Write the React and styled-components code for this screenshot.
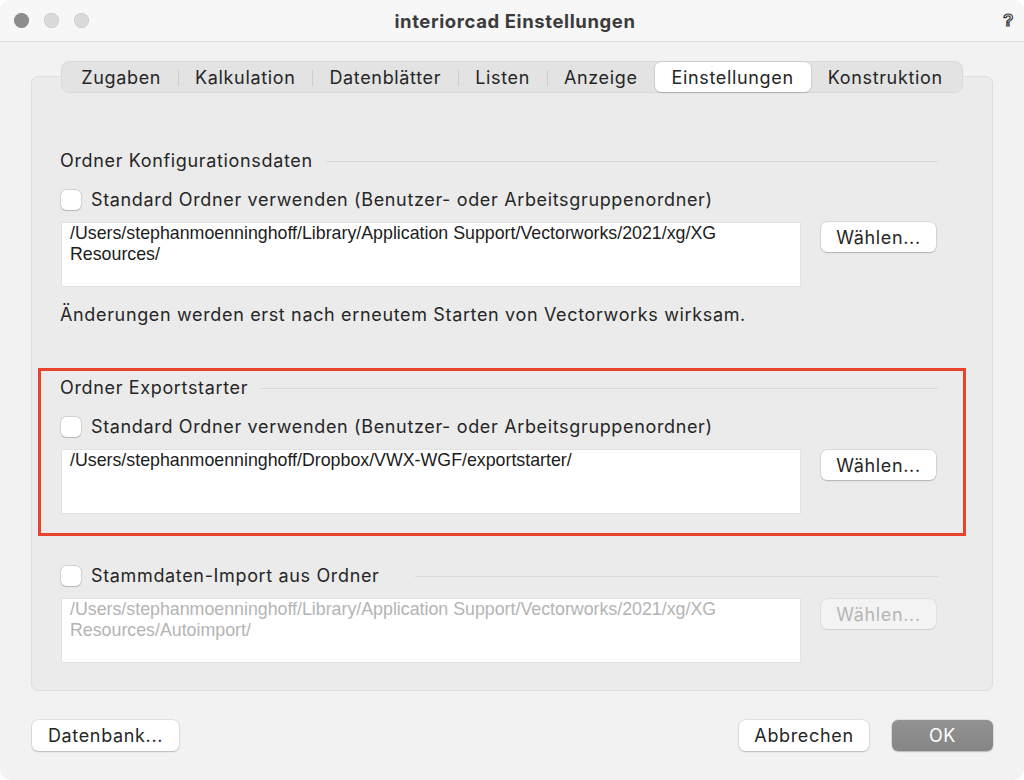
import React from "react";
import styled, { createGlobalStyle } from "styled-components";

const GlobalStyle = createGlobalStyle`
  html, body { margin: 0; padding: 0; background: #ffffff; }
  body {
    font-family: Inter, "Noto Sans", sans-serif;
    letter-spacing: 0.65px;
    -webkit-font-smoothing: antialiased;
  }
`;

const Window = styled.div`
  width: 1024px;
  height: 780px;
  background: #f2f2f2;
  border-radius: 11px;
  overflow: hidden;
  display: flex;
  flex-direction: column;
  box-sizing: border-box;
`;

const TitleBar = styled.div`
  height: 41px;
  flex: none;
  background: #f7f7f7;
  border-bottom: 1px solid #dcdcdc;
  display: grid;
  grid-template-columns: 1fr auto 1fr;
  align-items: center;
  padding: 0 8px 0 14px;
`;

const Lights = styled.div`
  display: flex;
  gap: 15px;
  align-items: center;
`;

const Light = styled.span`
  width: 15px;
  height: 15px;
  border-radius: 50%;
  background: ${(p) => (p.$dark ? "#8d8d8d" : "#dadada")};
  box-shadow: inset 0 0 0 0.5px rgba(0, 0, 0, 0.12);
`;

const Title = styled.div`
  font-size: 18.5px;
  font-weight: 700;
  color: #3b3b3b;
  letter-spacing: 0.6px;
`;

const Help = styled.div`
  justify-self: end;
  font-family: "Liberation Sans", sans-serif;
  font-size: 17px;
  font-weight: 700;
  color: #f7f7f7;
  -webkit-text-stroke: 1.2px #3a3a3a;
  margin-right: 2px;
`;

const Body = styled.div`
  flex: 1;
  display: flex;
  flex-direction: column;
  padding: 19px 31px 0;
`;

const TabsRow = styled.div`
  display: flex;
  justify-content: center;
  margin-bottom: -17px;
  position: relative;
  z-index: 1;
`;

const Segmented = styled.div`
  display: flex;
  align-items: center;
  height: 32px;
  box-sizing: border-box;
  padding: 1px 2px;
  background: #e3e3e3;
  border: 1px solid #d9d9d9;
  border-radius: 8px;
`;

const Tab = styled.div`
  position: relative;
  height: 30px;
  display: flex;
  align-items: center;
  padding: 0 17px;
  font-size: 18px;
  color: #262626;
  border-radius: 6px;
  background: ${(p) => (p.$active ? "#ffffff" : "transparent")};
  box-shadow: ${(p) =>
    p.$active ? "0 0 0 0.5px rgba(0,0,0,0.12), 0 1px 1.5px rgba(0,0,0,0.15)" : "none"};
  &::before {
    content: "";
    display: ${(p) => (p.$sep ? "block" : "none")};
    position: absolute;
    left: 0;
    top: 8px;
    width: 1px;
    height: 16px;
    background: #cdcdcd;
  }
`;

const Panel = styled.div`
  background: #ebebeb;
  border: 1px solid #dedede;
  border-radius: 7px;
  padding: 64px 26px 5px 6px;
  display: flex;
  flex-direction: column;
  gap: 20px;
`;

const Section = styled.div`
  border: 3px solid ${(p) => (p.$highlight ? "#e8432b" : "transparent")};
  padding: 6px 25px 19px 19px;
`;

const HeadRow = styled.div`
  display: flex;
  align-items: center;
  height: 22px;
`;

const HeadText = styled.div`
  font-size: 18px;
  line-height: 22px;
  color: #262626;
  white-space: nowrap;
`;

const Rule = styled.div`
  flex: 1;
  height: 1px;
  background: #d9d9d9;
  margin-left: ${(p) => p.$gap || 13}px;
`;

const CheckRow = styled.div`
  display: flex;
  align-items: center;
  height: 22px;
  margin-top: ${(p) => p.$top || 0}px;
`;

const Box = styled.span`
  width: 20px;
  height: 20px;
  box-sizing: border-box;
  flex: none;
  margin-left: 1px;
  margin-right: 10px;
  border-radius: 5px;
  background: #ffffff;
  box-shadow: 0 0 0 0.5px rgba(0, 0, 0, 0.2), 0 0.5px 1px rgba(0, 0, 0, 0.15);
`;

const PathRow = styled.div`
  display: flex;
  align-items: flex-start;
  gap: 20px;
  margin-top: 11px;
  padding-right: 2px;
`;

const PathBox = styled.div`
  flex: 1;
  height: 65px;
  box-sizing: border-box;
  margin-left: 1px;
  background: #ffffff;
  border: 1px solid #e2e2e2;
  padding: 0 8px;
  font-family: "Liberation Sans", Arial, sans-serif;
  font-size: 17.8px;
  line-height: 21px;
  letter-spacing: 0;
  white-space: pre-wrap;
  color: ${(p) => (p.$disabled ? "#b4b4b4" : "#1c1c1c")};
`;

const Button = styled.button`
  width: ${(p) => p.$w || 115}px;
  height: ${(p) => p.$h || 30}px;
  flex: none;
  margin-top: ${(p) => p.$top || 0}px;
  border: none;
  border-radius: 6px;
  font-family: Inter, "Noto Sans", sans-serif;
  font-size: 18px;
  letter-spacing: 0.65px;
  padding: 0;
  color: ${(p) => (p.$primary ? "#ffffff" : p.$disabled ? "#b6b6b6" : "#262626")};
  background: ${(p) =>
    p.$primary
      ? "linear-gradient(#929292, #858585)"
      : p.$disabled
      ? "#f3f3f3"
      : "#ffffff"};
  box-shadow: ${(p) =>
    p.$disabled
      ? "0 0 0 0.5px rgba(0,0,0,0.08), 0 0.5px 1px rgba(0,0,0,0.08)"
      : "0 0 0 0.5px rgba(0,0,0,0.14), 0 1px 1.5px rgba(0,0,0,0.18)"};
`;

const Note = styled.div`
  font-size: 18px;
  line-height: 22px;
  color: #262626;
  margin-top: 17px;
`;

const Footer = styled.div`
  display: flex;
  align-items: center;
  gap: 23px;
  padding: 29px 0 0 1px;
`;

const Spacer = styled.div`
  flex: 1;
`;

const tabs = [
  "Zugaben",
  "Kalkulation",
  "Datenblätter",
  "Listen",
  "Anzeige",
  "Einstellungen",
  "Konstruktion",
];
const activeTab = 5;

const configPath =
  "/Users/stephanmoenninghoff/Library/Application Support/Vectorworks/2021/xg/XG\nResources/";
const exportPath = "/Users/stephanmoenninghoff/Dropbox/VWX-WGF/exportstarter/";
const importPath =
  "/Users/stephanmoenninghoff/Library/Application Support/Vectorworks/2021/xg/XG\nResources/Autoimport/";

export default function App() {
  return (
    <>
      <GlobalStyle />
      <Window>
        <TitleBar>
          <Lights>
            <Light $dark />
            <Light />
            <Light />
          </Lights>
          <Title>interiorcad Einstellungen</Title>
          <Help>?</Help>
        </TitleBar>
        <Body>
          <TabsRow>
            <Segmented>
              {tabs.map((t, i) => (
                <Tab
                  key={t}
                  $active={i === activeTab}
                  $sep={i > 0 && i !== activeTab && i !== activeTab + 1}
                >
                  {t}
                </Tab>
              ))}
            </Segmented>
          </TabsRow>
          <Panel>
            <Section>
              <HeadRow>
                <HeadText>Ordner Konfigurationsdaten</HeadText>
                <Rule />
              </HeadRow>
              <CheckRow $top={17}>
                <Box />
                <HeadText>Standard Ordner verwenden (Benutzer- oder Arbeitsgruppenordner)</HeadText>
              </CheckRow>
              <PathRow>
                <PathBox>{configPath}</PathBox>
                <Button>Wählen...</Button>
              </PathRow>
              <Note>Änderungen werden erst nach erneutem Starten von Vectorworks wirksam.</Note>
            </Section>
            <Section $highlight>
              <HeadRow>
                <HeadText>Ordner Exportstarter</HeadText>
                <Rule $gap={12} />
              </HeadRow>
              <CheckRow $top={17}>
                <Box />
                <HeadText>Standard Ordner verwenden (Benutzer- oder Arbeitsgruppenordner)</HeadText>
              </CheckRow>
              <PathRow>
                <PathBox>{exportPath}</PathBox>
                <Button $top={1}>Wählen...</Button>
              </PathRow>
            </Section>
            <Section>
              <CheckRow>
                <Box />
                <HeadText>Stammdaten-Import aus Ordner</HeadText>
                <Rule $gap={35} />
              </CheckRow>
              <PathRow>
                <PathBox $disabled>{importPath}</PathBox>
                <Button $disabled $top={1}>Wählen...</Button>
              </PathRow>
            </Section>
          </Panel>
          <Footer>
            <Button $w={147} $h={31}>Datenbank...</Button>
            <Spacer />
            <Button $w={130} $h={31}>Abbrechen</Button>
            <Button $w={101} $h={31} $primary>OK</Button>
          </Footer>
        </Body>
      </Window>
    </>
  );
}
